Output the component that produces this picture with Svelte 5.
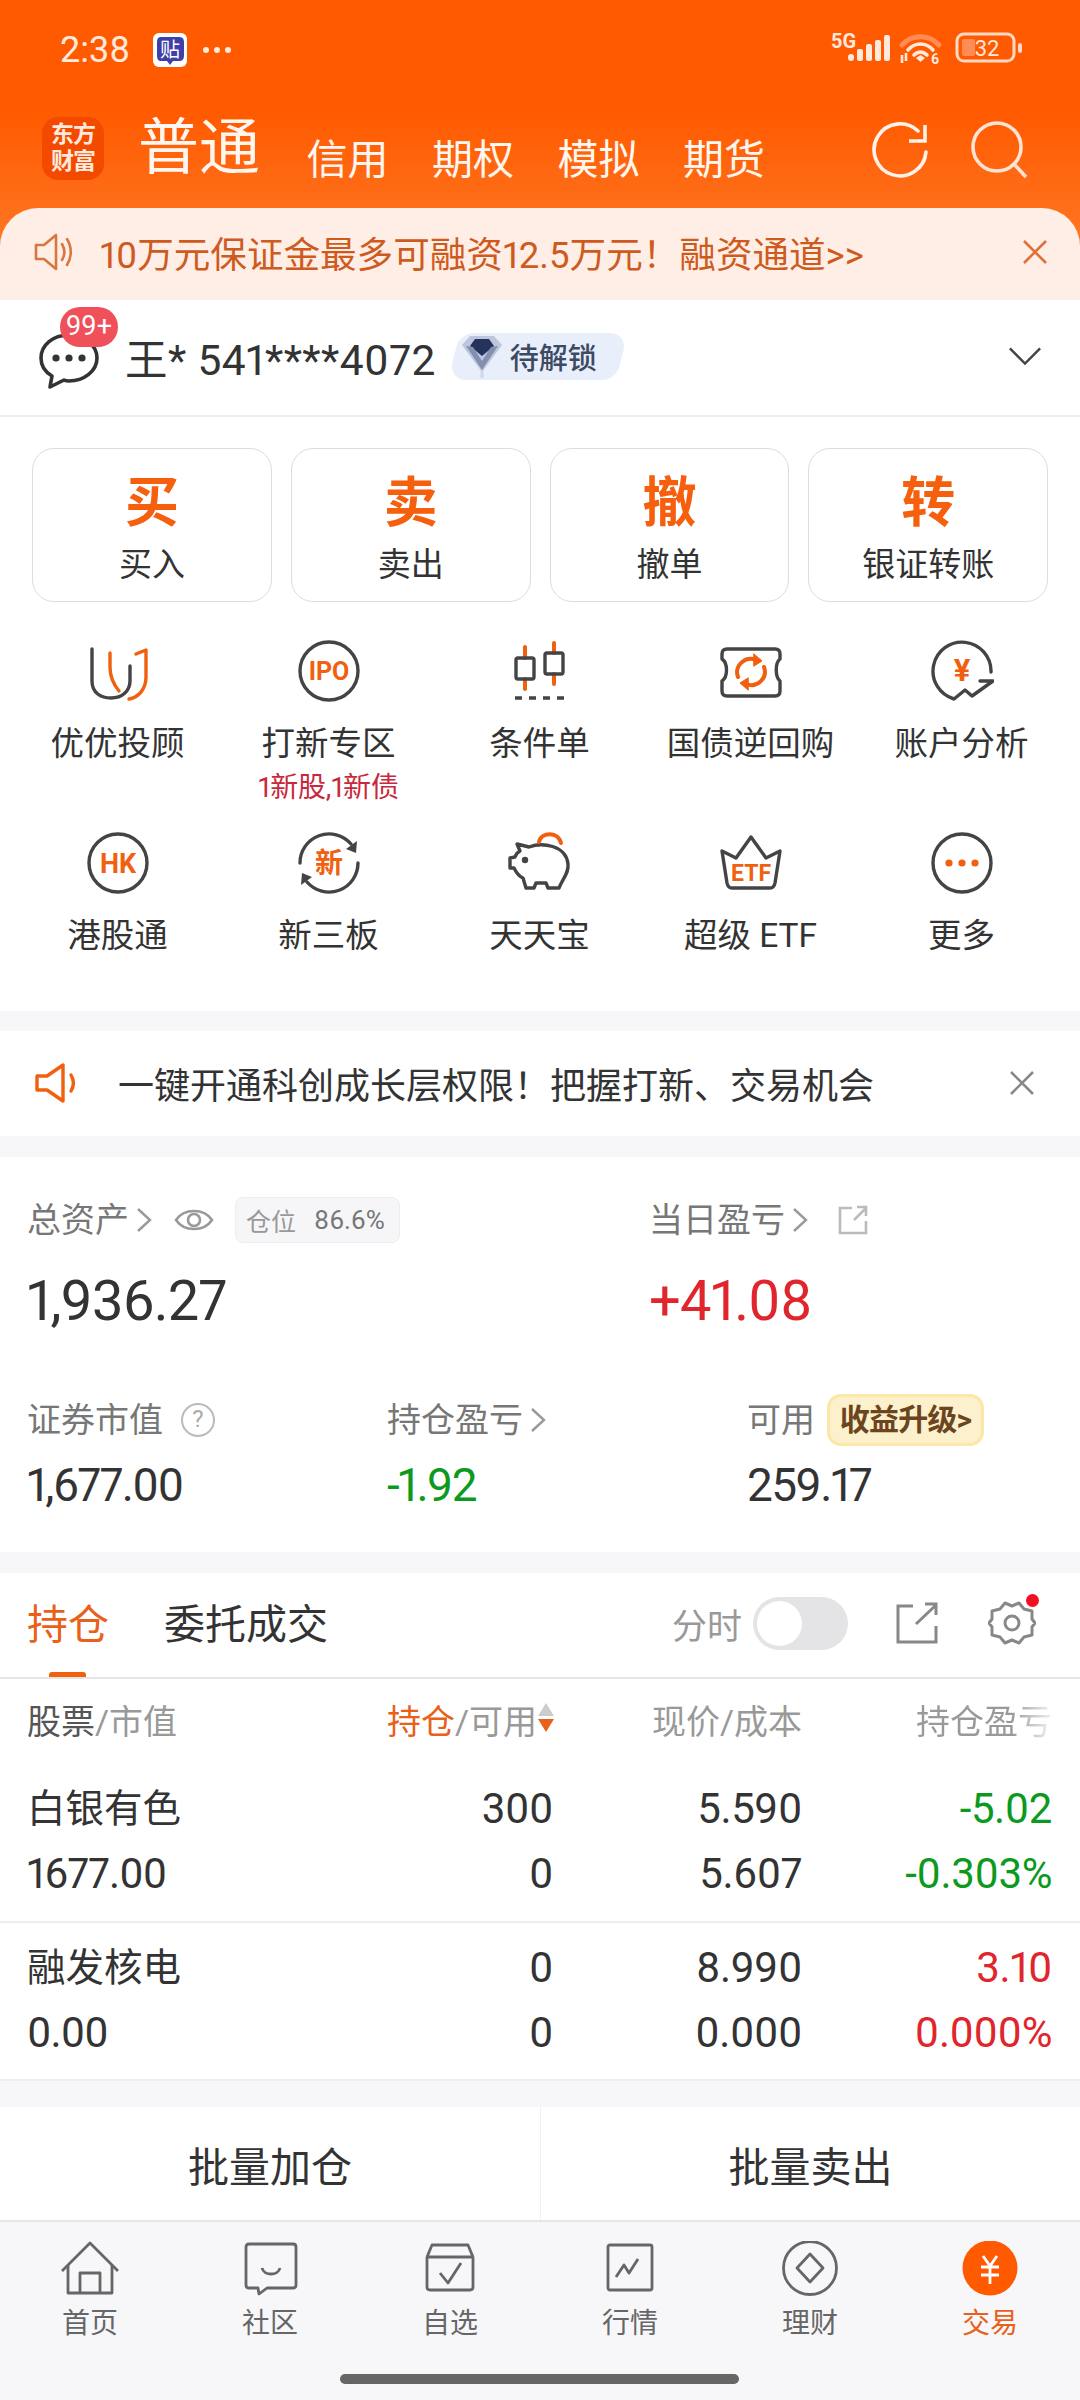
<script>
	const OR = '#f0600f';
	const DK = '#444';
	const svg = (inner) =>
		`<svg width="64" height="64" viewBox="0 0 64 64" fill="none" stroke-width="3.4" stroke-linecap="round" stroke-linejoin="round">${inner}</svg>`;
	const label = (t, y, size) =>
		`<text x="32" y="${y}" text-anchor="middle" font-family="Roboto, 'Noto Sans CJK SC', sans-serif" font-weight="700" font-size="${size}" fill="${OR}" stroke="none">${t}</text>`;

	const tiles = [
		{
			name: '优优投顾',
			icon: svg(
				`<path d="M6 10V42C6 54 15 59 25 59C36 59 44 52 44 42V27" stroke="${DK}"/><path d="M24 14V28C24 38 28 46 33 52" stroke="${OR}"/><path d="M43 60C52 59 60 50 60 38V11L50 15" stroke="${OR}"/>`
			)
		},
		{
			name: '打新专区',
			sub: '1新股,1新债',
			icon: svg(`<circle cx="32" cy="32" r="29" stroke="${DK}"/>${label('IPO', 41, 25)}`)
		},
		{
			name: '条件单',
			icon: svg(
				`<path d="M17 8V19M17 40V50M46 4V14M46 35V45" stroke="${OR}" stroke-width="4"/><rect x="8" y="19" width="18" height="21" rx="2" stroke="${DK}"/><rect x="37" y="14" width="18" height="21" rx="2" stroke="${DK}"/><path d="M7 59H57" stroke="${DK}" stroke-dasharray="7 7" stroke-linecap="butt"/>`
			)
		},
		{
			name: '国债逆回购',
			icon: svg(
				`<path d="M8 10H56Q61 10 61 15V20C56 24 56 38 61 42V52Q61 57 56 57H8Q3 57 3 52V42C9 38 9 24 3 20V15Q3 10 8 10Z" stroke="${DK}"/><path d="M19 38A13.5 13.5 0 0 1 37 21M45 28A13.5 13.5 0 0 1 27 45" stroke="${OR}" stroke-width="4"/><path d="M35 15L43 22L35 27ZM29 39L21 44L29 51Z" fill="${OR}" stroke="${OR}" stroke-width="1"/>`
			)
		},
		{
			name: '账户分析',
			icon: svg(
				`<path d="M61 33A29 29 0 1 0 24 60L35 51L42 57L63 42H50" stroke="${DK}"/>${label('¥', 42, 31)}`
			)
		},
		{
			name: '港股通',
			icon: svg(`<circle cx="32" cy="32" r="29" stroke="${DK}"/>${label('HK', 42, 27)}`)
		},
		{
			name: '新三板',
			icon: svg(
				`<path d="M3 32A29 29 0 0 1 54 13M61 32A29 29 0 0 1 10 51" stroke="${DK}"/><path d="M60 10L59 22L49 18ZM4 54L5 42L15 46Z" fill="${DK}" stroke="none"/>${label('新', 42, 28)}`
			)
		},
		{
			name: '天天宝',
			icon: svg(
				`<path d="M9 13L21 16C34 11 58 14 60 33C61 42 55 47 51 57H40L38 52H28L26 57H18L15 47C10 45 8 41 6 37H2V27L7 26C8 23 10 21 12 20Z" stroke="${DK}"/><circle cx="17" cy="29" r="3.2" fill="${DK}" stroke="none"/><path d="M31 11C33 1 50 0 53 12" stroke="${OR}" stroke-width="4"/>`
			)
		},
		{
			name: '超级 ETF',
			icon: svg(
				`<path d="M3 20L17 27L32 6L47 27L61 20L56 52Q55 57 51 57H13Q9 57 8 52Z" stroke="${DK}"/>${label('ETF', 50, 23)}`
			)
		},
		{
			name: '更多',
			icon: svg(
				`<circle cx="32" cy="32" r="29" stroke="${DK}"/><g fill="${OR}" stroke="none"><circle cx="19" cy="32" r="3.6"/><circle cx="32" cy="32" r="3.6"/><circle cx="45" cy="32" r="3.6"/></g>`
			)
		}
	];

	const actions = [
		['买', '买入'],
		['卖', '卖出'],
		['撤', '撤单'],
		['转', '银证转账']
	];

	const rows = [
		{ name: '白银有色', cap: '1677.00', qty: '300', free: '0', price: '5.590', cost: '5.607', pl: '-5.02', pct: '-0.303%', tone: 'down' },
		{ name: '融发核电', cap: '0.00', qty: '0', free: '0', price: '8.990', cost: '0.000', pl: '3.10', pct: '0.000%', tone: 'up' }
	];

	const G = '#666';
	const nav = [
		{
			name: '首页',
			icon: `<path d="M2 30L30 2L58 30" /><path d="M8 24V52H52V24M20 52V32H40V52" />`
		},
		{
			name: '社区',
			icon: `<path d="M9 3H53Q56 3 56 6V44Q56 47 53 47H27L19 53L18 47H9Q6 47 6 44V6Q6 3 9 3Z" /><path d="M22 27C24 35 38 35 40 27" />`
		},
		{
			name: '自选',
			icon: `<path d="M7 16L12 4H48L53 16M7 16H53V46Q53 49 50 49H10Q7 49 7 46Z" /><path d="M20 32L28 42L41 22" />`
		},
		{
			name: '行情',
			icon: `<rect x="8" y="4" width="44" height="45" rx="2" /><path d="M16 36L24 24L29 32L38 18" />`
		},
		{
			name: '理财',
			icon: `<circle cx="30" cy="27" r="26.5" /><path d="M30 13L43 27L30 41L17 27Z" />`
		}
	];
</script>

<div class="page">
	<header class="top">
		<div class="status">
			<span class="time">2:38</span>
			<span class="appicon">
				<svg width="34" height="34" viewBox="0 0 34 34">
					<rect width="34" height="34" rx="6" fill="#fff" />
					<path d="M8 4H26Q31 4 31 9V23Q31 28 26 28H20L17 32L14 28H8Q4 28 4 23V9Q4 4 8 4Z" fill="#3f3fa8" />
					<text x="17" y="24" text-anchor="middle" font-size="20" fill="#fff" font-family="'Noto Sans CJK SC', sans-serif">贴</text>
				</svg>
			</span>
			<span class="dots"><i></i><i></i><i></i></span>
			<span class="sysicons">
				<svg width="200" height="60" viewBox="0 -10 200 60">
					<text x="0" y="16" font-size="20" font-weight="700" fill="#ffe9dc" font-family="Roboto, sans-serif">5G</text>
					<g fill="#ffe9dc">
						<rect x="17" y="22" width="6" height="7" rx="3" />
						<rect x="26" y="17" width="6" height="12" rx="2" />
						<rect x="35" y="12" width="6" height="17" rx="2" />
						<rect x="44" y="8" width="6" height="21" rx="2" />
						<rect x="53" y="3" width="6" height="26" rx="2" />
					</g>
					<g fill="none" stroke-linecap="round">
						<path d="M71 13C81 2 98 2 108 13" stroke="#ff8c54" stroke-width="5" />
						<path d="M77 18C84 10 95 10 102 18" stroke="#ffe9dc" stroke-width="3.6" />
						<path d="M83 23C87 19 92 19 96 23" stroke="#ffe9dc" stroke-width="3.6" />
					</g>
					<path d="M85 26L89.5 23L94 26L89.5 30Z" fill="#ffe9dc" />
					<path d="M71 23V31M75 21V29" stroke="#ffe9dc" stroke-width="2.6" />
					<text x="100" y="32" font-size="14" font-weight="700" fill="#ffe9dc" font-family="Roboto, sans-serif">6</text>
					<rect x="126" y="2" width="57" height="27" rx="7" fill="none" stroke="#ffd9c3" stroke-width="3" />
					<rect x="131" y="7" width="13" height="17" rx="2" fill="#ff8c54" />
					<text x="156" y="24" text-anchor="middle" font-size="22" fill="#ffe9dc" font-family="Roboto, sans-serif">32</text>
					<rect x="187" y="11" width="4" height="10" rx="2" fill="#ffd9c3" />
				</svg>
			</span>
		</div>
		<nav class="tabs">
			<span class="logo">东方<br />财富</span>
			<span class="tab main">普通</span>
			<span class="tab">信用</span>
			<span class="tab">期权</span>
			<span class="tab">模拟</span>
			<span class="tab">期货</span>
			<span class="tools">
				<svg width="60" height="60" viewBox="0 0 60 60" fill="none" stroke="#fff2ea" stroke-width="3.6" stroke-linecap="round">
					<path d="M56 32A26 26 0 1 1 48 11" />
					<path d="M55 5V21H39" stroke-linecap="butt" />
				</svg>
				<svg width="60" height="60" viewBox="0 0 60 60" fill="none" stroke="#ffe3d3" stroke-width="3.6">
					<circle cx="27" cy="27" r="24" />
					<path d="M44 44L56 57" />
				</svg>
			</span>
		</nav>
		<div class="notice">
			<svg width="40" height="40" viewBox="0 0 40 40" fill="none" stroke="#d9763f" stroke-width="2.6" stroke-linejoin="round" stroke-linecap="round">
				<path d="M2 13H10L22 3V37L10 27H2Z" />
				<path d="M28 12C31 17 31 23 28 28M33 7C38 15 38 25 33 33" />
			</svg>
			<span>10万元保证金最多可融资12.5万元！融资通道&gt;&gt;</span>
			<svg class="close" width="26" height="26" viewBox="0 0 26 26" fill="none" stroke="#e0703a" stroke-width="2.6">
				<path d="M2 2L24 24M24 2L2 24" />
			</svg>
		</div>
	</header>

	<section class="account">
		<span class="msg">
			<svg width="62" height="66" viewBox="0 0 62 66" fill="none" stroke="#333" stroke-width="3.6" stroke-linejoin="round">
				<path d="M31 8C15 8 3 18 3 31C3 39 7 45 14 49L12 60L26 53C28 54 29 54 31 54C46 54 59 44 59 31C59 18 46 8 31 8Z" />
				<g fill="#333" stroke="none">
					<circle cx="18" cy="31" r="3.6" />
					<circle cx="31" cy="31" r="3.6" />
					<circle cx="44" cy="31" r="3.6" />
				</g>
			</svg>
			<b class="badge">99+</b>
		</span>
		<span class="user">王* 541****4072</span>
		<span class="lock">
			<svg width="40" height="44" viewBox="0 0 40 44">
				<path d="M8 2H32L40 11L20 38L0 11Z" fill="#bcc7de" />
				<path d="M13 5H27L32 12L20 22L8 12Z" fill="#25335c" />
				<path d="M4 12L20 36L36 12L29 13L20 27L11 13Z" fill="#8490ad" />
				<path d="M20 36V44" stroke="#cfd8ea" stroke-width="3" />
			</svg>
			<span>待解锁</span>
		</span>
		<svg class="chev" width="34" height="22" viewBox="0 0 36 22" fill="none" stroke="#444" stroke-width="2.6">
			<path d="M2 3L18 19L34 3" />
		</svg>
	</section>

	<section class="actions">
		{#each actions as [big, small]}
			<div class="action">
				<b>{big}</b>
				<span>{small}</span>
			</div>
		{/each}
	</section>

	<section class="tiles">
		{#each tiles as t}
			<div class="tile">
				<span class="ico">{@html t.icon}</span>
				<span class="name">{t.name}</span>
				{#if t.sub}<span class="sub">{t.sub}</span>{/if}
			</div>
		{/each}
	</section>

	<section class="banner">
		<svg width="46" height="42" viewBox="0 0 46 42" fill="none" stroke={OR} stroke-width="3.4" stroke-linejoin="round" stroke-linecap="round">
			<path d="M2 14H12L28 3V39L12 28H2Z" />
			<path d="M36 13C39 18 39 24 36 29" />
		</svg>
		<span>一键开通科创成长层权限！把握打新、交易机会</span>
		<svg class="close" width="26" height="26" viewBox="0 0 26 26" fill="none" stroke="#888" stroke-width="2.6">
			<path d="M2 2L24 24M24 2L2 24" />
		</svg>
	</section>

	<section class="assets">
		<div class="head">
			<div class="hcol">
				<span class="lbl">总资产</span>
				<svg class="arrow" width="16" height="26" viewBox="0 0 16 26" fill="none" stroke="#999" stroke-width="2.4"><path d="M2 2L14 13L2 24" /></svg>
				<svg class="eye" width="40" height="30" viewBox="0 0 40 30" fill="none" stroke="#999" stroke-width="2.6">
					<path d="M2 15C10 3 30 3 38 15C30 27 10 27 2 15Z" />
					<circle cx="20" cy="15" r="6" />
				</svg>
				<span class="pill"><em>仓位</em>86.6%</span>
			</div>
			<div class="hcol right">
				<span class="lbl">当日盈亏</span>
				<svg class="arrow" width="16" height="26" viewBox="0 0 16 26" fill="none" stroke="#999" stroke-width="2.4"><path d="M2 2L14 13L2 24" /></svg>
				<svg class="ext" width="30" height="30" viewBox="0 0 30 30" fill="none" stroke="#bbb" stroke-width="2.6">
					<path d="M14 3H2V28H28V16M16 15L28 3M19 2H28V11" />
				</svg>
			</div>
		</div>
		<div class="totals">
			<span class="total">1,936.27</span>
			<span class="total up">+41.08</span>
		</div>
		<div class="sub3">
			<div>
				<div class="lblrow">
					<span class="lbl">证券市值</span>
					<span class="q">?</span>
				</div>
				<div class="val">1,677.00</div>
			</div>
			<div>
				<div class="lblrow">
					<span class="lbl">持仓盈亏</span>
					<svg class="arrow" width="16" height="26" viewBox="0 0 16 26" fill="none" stroke="#999" stroke-width="2.4"><path d="M2 2L14 13L2 24" /></svg>
				</div>
				<div class="val down">-1.92</div>
			</div>
			<div>
				<div class="lblrow">
					<span class="lbl">可用</span>
					<span class="gold">收益升级&gt;</span>
				</div>
				<div class="val">259.17</div>
			</div>
		</div>
	</section>

	<section class="holdings">
		<div class="htabs">
			<span class="htab on">持仓</span>
			<span class="htab">委托成交</span>
			<span class="hright">
				<span class="fs">分时</span>
				<span class="switch"><i></i></span>
				<svg class="shr" width="42" height="42" viewBox="0 0 42 42" fill="none" stroke="#888" stroke-width="3">
					<path d="M17 4H2V40H40V24M20 22L40 3M29 2H40V13" />
				</svg>
				<span class="gear">
					<svg width="48" height="48" viewBox="0 0 48 48" fill="none" stroke="#888" stroke-width="3" stroke-linejoin="round">
						<path d="M17 4L24 7L31 4L36 10L44 12V20L47 24L44 28V36L36 38L31 44L24 41L17 44L12 38L4 36V28L1 24L4 20V12L12 10Z" />
						<circle cx="24" cy="24" r="7" />
					</svg>
					<i></i>
				</span>
			</span>
		</div>
		<div class="thead grid">
			<span><b class="dark">股票</b>/市值</span>
			<span class="r sorted"><b class="act">持仓</b>/可用<span class="sort"><i></i><i></i></span></span>
			<span class="r">现价/成本</span>
			<span class="r"><span class="fade">持仓盈亏</span></span>
		</div>
		{#each rows as row}
			<div class="row grid">
				<span class="cn">{row.name}</span>
				<span class="r">{row.qty}</span>
				<span class="r">{row.price}</span>
				<span class="r {row.tone}">{row.pl}</span>
				<span class="cap">{row.cap}</span>
				<span class="r">{row.free}</span>
				<span class="r">{row.cost}</span>
				<span class="r {row.tone}">{row.pct}</span>
			</div>
		{/each}
	</section>

	<section class="batch">
		<span>批量加仓</span>
		<span>批量卖出</span>
	</section>

	<footer class="bottom">
		<div class="items">
			{#each nav as n}
				<div class="item">
					<svg width="60" height="56" viewBox="0 0 60 56" fill="none" stroke={G} stroke-width="2.8" stroke-linejoin="round">
						{@html n.icon}
					</svg>
					<span>{n.name}</span>
				</div>
			{/each}
			<div class="item on">
				<svg width="60" height="56" viewBox="0 0 60 56">
					<circle cx="30" cy="27" r="27.5" fill="#ff5a00" />
					<path d="M23 15L30 25L37 15M21 26H39M21 34H39M30 25V43" fill="none" stroke="#fff" stroke-width="2.8" />
				</svg>
				<span>交易</span>
			</div>
		</div>
		<div class="homebar"></div>
	</footer>
</div>

<style>
	:global(body) {
		margin: 0;
		background: #fff;
	}
	.page {
		width: 1080px;
		height: 2400px;
		overflow: hidden;
		font-family: Roboto, 'Noto Sans CJK SC', sans-serif;
		font-variant-numeric: proportional-nums;
		color: #333;
		display: flex;
		flex-direction: column;
	}
	svg {
		display: block;
		flex: none;
	}
	i {
		font-style: normal;
	}

	.top {
		background: linear-gradient(180deg, #ff5a00 0, #ff5a00 110px, #ff731f 230px);
	}
	.status {
		height: 100px;
		box-sizing: border-box;
		padding: 0 60px;
		display: flex;
		align-items: center;
		color: #ffe9dc;
	}
	.time {
		font-size: 36px;
		width: 93px;
	}
	.dots {
		display: flex;
		gap: 5px;
		margin-left: 16px;
	}
	.dots i {
		width: 6px;
		height: 6px;
		border-radius: 50%;
		background: #ffe9dc;
	}
	.sysicons {
		margin-left: auto;
		margin-right: -11px;
		padding-top: 4px;
	}
	.tabs {
		height: 108px;
		box-sizing: border-box;
		padding: 0 42px 0 42px;
		display: flex;
		align-items: flex-start;
		color: #fff6f0;
	}
	.logo {
		width: 62px;
		height: 63px;
		margin-top: 17px;
		border-radius: 16px;
		background: #f34a00;
		color: #ffe9dc;
		font-size: 23px;
		font-weight: 700;
		line-height: 27px;
		text-align: center;
		padding-top: 4px;
		box-sizing: border-box;
		letter-spacing: -1px;
	}
	.tab {
		font-size: 41px;
		line-height: 44px;
		margin-top: 38px;
		margin-left: 43.5px;
	}
	.tab.main {
		font-size: 61px;
		line-height: 70px;
		margin-top: 13px;
		margin-left: 34px;
		margin-right: 3px;
	}
	.tools {
		margin-left: auto;
		display: flex;
		gap: 40px;
		margin-top: 20px;
		margin-right: 8px;
	}
	.notice {
		height: 92px;
		box-sizing: border-box;
		padding: 0 32px 4px 34px;
		background: #feeee6;
		border-radius: 38px 38px 0 0;
		display: flex;
		align-items: center;
		font-size: 36.6px;
		color: #cf5a1e;
	}
	.notice span {
		margin-left: 26px;
	}
	.close {
		margin-left: auto;
	}

	.account {
		height: 117px;
		box-sizing: border-box;
		border-bottom: 2px solid #eee;
		padding: 0 38px 3px;
		display: flex;
		align-items: center;
	}
	.msg {
		position: relative;
		width: 60px;
		height: 66px;
		margin-top: 8px;
	}
	.badge {
		position: absolute;
		left: 22px;
		top: -20px;
		width: 58px;
		height: 40px;
		border-radius: 20px;
		background: #f0505a;
		color: #fff;
		font-size: 27px;
		font-weight: 400;
		line-height: 39px;
		text-align: center;
	}
	.user {
		margin-left: 27px;
		font-size: 42.5px;
		letter-spacing: 0.4px;
	}
	.lock {
		position: relative;
		margin-left: 18px;
		height: 47px;
		width: 168px;
		display: flex;
		align-items: center;
		font-size: 29px;
		font-weight: 500;
		color: #3d4a63;
	}
	.lock::before {
		content: '';
		position: absolute;
		inset: 0;
		background: #e8eefa;
		border-radius: 14px 18px 14px 18px;
		transform: skewX(-14deg);
	}
	.lock svg {
		position: relative;
		margin-left: 8px;
	}
	.lock span {
		position: relative;
		margin-left: 8px;
	}
	.chev {
		margin-left: auto;
	}

	.actions {
		display: grid;
		grid-template-columns: repeat(4, 1fr);
		gap: 19px;
		padding: 31px 32px 0;
	}
	.action {
		height: 154px;
		box-sizing: border-box;
		border: 1.5px solid #ddd;
		border-radius: 22px;
		display: flex;
		flex-direction: column;
		align-items: center;
	}
	.action b {
		font-size: 54px;
		line-height: 62px;
		margin-top: 24px;
		color: #f55f0e;
	}
	.action span {
		font-size: 33px;
		line-height: 40px;
		margin-top: 10px;
	}

	.tiles {
		display: grid;
		grid-template-columns: repeat(5, 211px);
		grid-auto-rows: 192px;
		padding: 37px 12px 0;
		height: 409px;
		box-sizing: border-box;
	}
	.tile {
		display: flex;
		flex-direction: column;
		align-items: center;
	}
	.ico {
		height: 64px;
	}
	.name {
		font-size: 33.5px;
		line-height: 44px;
		margin-top: 19px;
	}
	.sub {
		font-size: 28px;
		line-height: 34px;
		margin-top: 5px;
		color: #c8283c;
		letter-spacing: -0.2px;
	}

	.banner {
		box-sizing: border-box;
		padding: 0 45px 2px 35px;
		border-top: 20px solid #f7f7f9;
		height: 125px;
		display: flex;
		align-items: center;
		font-size: 36px;
	}
	.banner span {
		margin-left: 37px;
	}

	.assets {
		border-top: 21px solid #f7f7f9;
		height: 416px;
		box-sizing: border-box;
		padding: 0 27px;
	}
	.head {
		display: grid;
		grid-template-columns: 622px 1fr;
		padding-top: 40px;
		height: 86px;
		box-sizing: border-box;
	}
	.hcol {
		display: flex;
		align-items: center;
		height: 46px;
	}
	.lbl {
		font-size: 34px;
		color: #777;
		padding-bottom: 5px;
	}
	.arrow {
		margin-left: 7px;
	}
	.eye {
		margin-left: 22px;
	}
	.ext {
		margin-left: 30px;
	}
	.pill {
		margin-left: 21px;
		width: 165px;
		height: 46px;
		box-sizing: border-box;
		border: 1.5px solid #eee;
		border-radius: 8px;
		background: #f6f6f8;
		display: flex;
		align-items: center;
		padding-left: 10px;
		font-size: 26px;
		color: #777;
	}
	.pill em {
		font-style: normal;
		color: #999;
		margin-right: 18px;
		font-size: 25px;
	}
	.totals {
		display: grid;
		grid-template-columns: 622px 1fr;
		margin-top: 28px;
		height: 60px;
	}
	.total {
		font-size: 56px;
		line-height: 60px;
		letter-spacing: -0.8px;
	}
	.up {
		color: #e0262c;
	}
	.down {
		color: #0c9a1e;
	}
	.sub3 {
		display: grid;
		grid-template-columns: 360px 360px 1fr;
		margin-top: 63px;
	}
	.lblrow {
		display: flex;
		align-items: center;
		height: 52px;
	}
	.q {
		margin-left: 18px;
		width: 34px;
		height: 34px;
		box-sizing: border-box;
		border: 2.6px solid #bbb;
		border-radius: 50%;
		color: #aaa;
		font-size: 24px;
		line-height: 29px;
		text-align: center;
	}
	.gold {
		margin-left: 12px;
		width: 157px;
		height: 52px;
		box-sizing: border-box;
		border: 3px solid #fbe7a6;
		border-radius: 14px;
		background: #fdf0cc;
		color: #6a4520;
		font-size: 30px;
		font-weight: 700;
		line-height: 45px;
		text-align: center;
		white-space: nowrap;
		letter-spacing: -0.8px;
	}
	.val {
		font-size: 46px;
		line-height: 52px;
		margin-top: 13px;
		letter-spacing: -1.6px;
	}

	.holdings {
		border-top: 21px solid #f7f7f9;
		box-sizing: border-box;
		height: 529px;
		border-bottom: 2px solid #eee;
	}
	.htabs {
		height: 106px;
		box-sizing: border-box;
		border-bottom: 2px solid #e6e6e6;
		padding: 0 27px;
		display: flex;
		align-items: flex-start;
	}
	.htab {
		font-size: 41px;
		line-height: 56px;
		margin-top: 24px;
		margin-right: 55px;
		position: relative;
		height: 80px;
	}
	.htab.on {
		color: #e8601a;
	}
	.htab.on::after {
		content: '';
		position: absolute;
		left: 22px;
		bottom: 0;
		width: 37px;
		height: 5px;
		border-radius: 3px 3px 0 0;
		background: #f0600f;
	}
	.hright {
		margin-left: auto;
		display: flex;
		align-items: center;
		height: 100px;
		margin-right: 17px;
	}
	.fs {
		font-size: 35px;
		color: #999;
	}
	.switch {
		margin-left: 11px;
		width: 95px;
		height: 53px;
		border-radius: 27px;
		background: #e4e4e6;
		padding: 4px;
		box-sizing: border-box;
	}
	.switch i {
		display: block;
		width: 45px;
		height: 45px;
		border-radius: 50%;
		background: #fff;
	}
	.shr {
		margin-left: 48px;
	}
	.gear {
		position: relative;
		margin-left: 50px;
	}
	.gear i {
		position: absolute;
		right: -3px;
		top: -5px;
		width: 13px;
		height: 13px;
		border-radius: 50%;
		background: #f01020;
	}
	.grid {
		display: grid;
		grid-template-columns: 1fr 220px 249px 250px;
		padding: 0 28px 0 27px;
	}
	.r {
		text-align: right;
	}
	.thead {
		height: 85px;
		align-items: center;
		font-size: 34px;
		color: #999;
		padding-bottom: 4px;
		box-sizing: border-box;
	}
	.thead b {
		font-weight: 400;
	}
	.dark {
		color: #555;
	}
	.act {
		color: #e8601a;
	}
	.sorted {
		position: relative;
		padding-right: 16px;
		white-space: nowrap;
	}
	.sort {
		position: absolute;
		right: -1px;
		top: 8px;
		display: flex;
		flex-direction: column;
		gap: 3px;
	}
	.sort i {
		width: 0;
		height: 0;
		border-left: 8px solid transparent;
		border-right: 8px solid transparent;
		border-bottom: 13px solid #ccc;
	}
	.sort i:last-child {
		border-bottom: 0;
		border-top: 13px solid #e8601a;
	}
	.fade {
		display: inline-block;
		background: linear-gradient(90deg, #999 70%, #f2f2f2 100%);
		-webkit-background-clip: text;
		background-clip: text;
		color: transparent;
	}
	.row {
		height: 159px;
		box-sizing: border-box;
		align-content: start;
		padding-top: 21px;
		font-size: 42px;
		line-height: 48px;
		row-gap: 17px;
		border-bottom: 2px solid #eee;
		letter-spacing: -0.4px;
	}
	.cn {
		font-size: 38.5px;
		letter-spacing: 0;
	}
	.cap {
		letter-spacing: -0.9px;
	}
	.row:last-child {
		border-bottom: 0;
	}

	.batch {
		margin-top: 0;
		border-top: 26px solid #f7f7f9;
		height: 139px;
		box-sizing: border-box;
		display: grid;
		grid-template-columns: 1fr 1fr;
		font-size: 41px;
	}
	.batch span {
		display: flex;
		align-items: center;
		justify-content: center;
	}
	.batch span + span {
		border-left: 1.5px solid #f0f0f0;
	}

	.bottom {
		flex: 1;
		background: #f7f7f9;
		border-top: 2px solid #e6e6e6;
		position: relative;
	}
	.items {
		display: grid;
		grid-template-columns: repeat(6, 180px);
		padding-top: 19px;
	}
	.item {
		display: flex;
		flex-direction: column;
		align-items: center;
		font-size: 28px;
		color: #666;
	}
	.item span {
		line-height: 36px;
		margin-top: 9px;
	}
	.item.on span {
		color: #e8601a;
	}
	.homebar {
		position: absolute;
		left: 340px;
		bottom: 16px;
		width: 399px;
		height: 10px;
		border-radius: 5px;
		background: #666;
	}
</style>
